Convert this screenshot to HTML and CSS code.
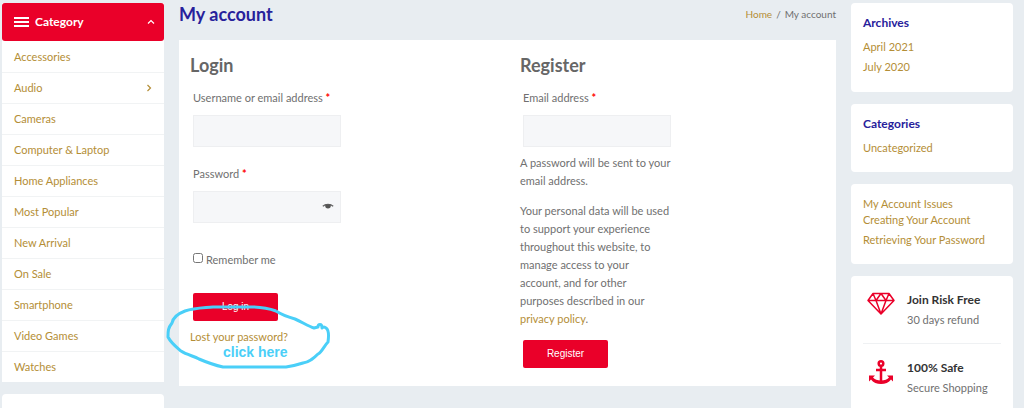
FILE: index.html
```html
<!DOCTYPE html>
<html lang="en">
<head>
<meta charset="utf-8">
<meta name="viewport" content="width=device-width, initial-scale=1">
<title>My account</title>
<link rel="stylesheet" href="styles.css">
</head>
<body>
<div class="page">
  <aside class="sidebar">
    <nav class="category">
      <button class="category-toggle" type="button" aria-expanded="true">
        <svg class="bars" viewBox="0 0 15 10" aria-hidden="true"><path d="M0 1h15M0 5h15M0 9h15"/></svg>
        <span class="category-title">Category</span>
        <svg class="caret" viewBox="0 0 8 8" aria-hidden="true"><path d="M1 5.5 4 2.5l3 3"/></svg>
      </button>
      <ul class="category-list">
        <li><a href="#">Accessories</a></li>
        <li><a href="#">Audio <svg class="caret" viewBox="0 0 8 8" aria-hidden="true"><path d="M2.5 1 5.5 4l-3 3"/></svg></a></li>
        <li><a href="#">Cameras</a></li>
        <li><a href="#">Computer &amp; Laptop</a></li>
        <li><a href="#">Home Appliances</a></li>
        <li><a href="#">Most Popular</a></li>
        <li><a href="#">New Arrival</a></li>
        <li><a href="#">On Sale</a></li>
        <li><a href="#">Smartphone</a></li>
        <li><a href="#">Video Games</a></li>
        <li><a href="#">Watches</a></li>
      </ul>
    </nav>
    <div class="card card-empty"></div>
  </aside>

  <main class="content">
    <header class="content-head">
      <h1>My account</h1>
      <nav class="breadcrumb"><a href="#">Home</a><span>/</span><span>My account</span></nav>
    </header>
    <div class="panel">
      <section class="login">
        <h2>Login</h2>
        <form class="form">
          <label for="username">Username or email address <b class="required">*</b></label>
          <input class="field" id="username" type="text">
          <label for="password">Password <b class="required">*</b></label>
          <div class="password">
            <input class="field" id="password" type="password">
            <button class="reveal" type="button" aria-label="Show password">
              <svg viewBox="0 0 12 6" aria-hidden="true"><path class="lid" d="M.8 3.2C3.4.7 8.6.7 11.2 3.2"/><path class="pupil" d="M3.2 1.4h5.6v1.4a2.8 2.6 0 0 1-5.6 0z"/></svg>
            </button>
          </div>
          <label class="remember"><input type="checkbox"> Remember me</label>
          <button class="button" type="button">Log in</button>
        </form>
        <a class="lost" href="#">Lost your password?</a>
        <div class="note">
          <svg viewBox="0 0 162 66" aria-hidden="true"><path d="M109 6C101 3 90 1.500 80 2H46C36 3 27 3 18 6C10 9 6 13 5 18C1 23 1 26 1 32C4 38 8 41 14 46C20 50 27 51 32 54C39 57 47 60 56 62H119C125 61 130 60 136 58C143 57 147 53 151 49C155 47 157 41 161 37C162 30 162 25 159 23Q157 21 155 23C155 18 151 19 151 22L147 23C141 21 135 17 128 14C121 12 115 10 109 6"/></svg>
          <span>click here</span>
        </div>
      </section>
      <section class="register">
        <h2>Register</h2>
        <form>
          <div class="form">
            <label for="email">Email address <b class="required">*</b></label>
            <input class="field" id="email" type="email">
          </div>
          <p>A password will be sent to your email address.</p>
          <p>Your personal data will be used to support your experience throughout this website, to manage access to your account, and for other purposes described in our <a href="#">privacy policy</a>.</p>
          <div class="form"><button class="button" type="button">Register</button></div>
        </form>
      </section>
    </div>
  </main>

  <aside class="sidebar widgets">
    <section class="card">
      <h3>Archives</h3>
      <ul class="links"><li><a href="#">April 2021</a></li><li><a href="#">July 2020</a></li></ul>
    </section>
    <section class="card">
      <h3>Categories</h3>
      <ul class="links"><li><a href="#">Uncategorized</a></li></ul>
    </section>
    <section class="card help">
      <ul class="links"><li><a href="#">My Account Issues<br>Creating Your Account</a></li><li><a href="#">Retrieving Your Password</a></li></ul>
    </section>
    <section class="card services">
      <div class="service">
        <svg viewBox="0 0 28 24" aria-hidden="true"><path class="line" d="M6 1.500h16l5 7L14 22 1 8.500zM1 8.500h26M6 1.500l3 7 5 13.500 5-13.500 3-7M9 8.500l5-7 5 7"/></svg>
        <div><h4>Join Risk Free</h4><p>30 days refund</p></div>
      </div>
      <div class="service">
        <svg viewBox="0 0 28 24" aria-hidden="true"><circle class="bold" cx="14" cy="3.600" r="2.300"/><path class="bold" d="M14 6v15M9 10h10"/><path class="solid" d="M2 15.500h6l-2 2c1.500 2 4.500 3 8 3s6.500-1 8-3l-2-2h6v6l-2-2c-2 3-6 4.500-10 4.500S6 22.500 4 19.500l-2 2z"/></svg>
        <div><h4>100% Safe</h4><p>Secure Shopping</p></div>
      </div>
    </section>
  </aside>
</div>
</body>
</html>
```
FILE: styles.css
```css
* { box-sizing: border-box; }
body {
  margin: 0;
  height: 100vh;
  overflow: hidden;
  background: #e8edf1;
  color: #707070;
  font: 11px/18px Lato, sans-serif;
}
h1, h2, h3, h4, p, ul { margin: 0; padding: 0; }
ul { list-style: none; }
a { color: #b48e36; text-decoration: none; }
button { border: 0; padding: 0; cursor: pointer; }

.page {
  display: grid;
  grid-template-columns: 162px minmax(0, 1fr) 162px;
  gap: 15px;
  padding: 3px 11px 0 2px;
}
.sidebar { display: flex; flex-direction: column; gap: 12px; }
.card { background: #fff; border-radius: 4px; padding: 12px 12px 16px; }
.card-empty { min-height: 60px; }

.category { background: #fff; }
.category-toggle {
  display: flex;
  align-items: center;
  gap: 6px;
  width: 100%;
  height: 38px;
  padding: 0 9px 0 12px;
  border-radius: 3px;
  background: #ea0029;
  color: #fff;
  font: bold 12px/18px Lato, sans-serif;
}
.bars { width: 15px; height: 10px; stroke: #fff; stroke-width: 2; }
.caret { width: 8px; height: 8px; margin-left: auto; fill: none; stroke: currentColor; stroke-width: 1.2; }
.category-list a {
  display: flex;
  align-items: center;
  height: 31px;
  padding: 0 11px 0 12px;
}
.category-list li + li a { border-top: 1px solid #f1f3f4; }

.content-head {
  display: flex;
  justify-content: space-between;
  align-items: center;
  height: 22px;
  margin-bottom: 15px;
}
h1 { color: #27219b; font-size: 18px; line-height: 22px; }
.breadcrumb { display: flex; gap: 4px; font-size: 10px; }
.panel {
  display: grid;
  grid-template-columns: 1fr 1fr;
  gap: 14px;
  background: #fff;
  padding: 12px 0 18px 11px;
}
h2 { color: #666; font-size: 18px; line-height: 26px; margin-bottom: 11px; }
.login { position: relative; }
.form { display: flex; flex-direction: column; align-items: flex-start; padding-left: 3px; }
.required { color: #f00; }
.field {
  width: 148px;
  height: 32px;
  margin: 8px 0 18px;
  padding: 0 8px;
  border: 1px solid #eeeff1;
  background: #f6f7f9;
  color: #777;
  font: inherit;
}
.password { position: relative; }
.reveal { position: absolute; top: 20px; right: 7px; width: 12px; height: 6px; background: none; }
.reveal svg { display: block; width: 12px; height: 6px; }
.lid { fill: none; stroke: #666; stroke-width: 1.2; }
.pupil { fill: #555; }
.remember { display: flex; align-items: center; gap: 3px; margin-top: 10px; }
.remember input { width: 10px; height: 10px; margin: 0 0 4px; }
.button {
  width: 85px;
  height: 28px;
  border-radius: 2px;
  background: #ea0029;
  color: #fff;
  font: 10px/18px "Liberation Sans", sans-serif;
}
.login .button { margin-top: 24px; }
.lost { display: inline-block; margin-top: 7px; }
.note { position: absolute; left: -23px; top: 253px; width: 162px; color: #4acff8; pointer-events: none; }
.note svg { display: block; width: 162px; height: 66px; overflow: visible; fill: none; stroke: currentColor; stroke-width: 3; stroke-linejoin: round; }
.note span { position: absolute; left: 56px; top: 38px; font: bold 14px/18px "Liberation Sans", sans-serif; }
.register .field { margin-bottom: 7px; }
.register p { width: 152px; margin-bottom: 12px; }

.widgets h3 { color: #27219b; font-size: 12px; line-height: 16px; margin-bottom: 7px; }
.links { display: grid; gap: 2px; }
.widgets .card:nth-child(2) { padding-bottom: 15px; }
.help { line-height: 16px; }
.help .links { gap: 4px; }
.widgets .services { padding: 0 12px; }
.service { display: grid; grid-template-columns: 28px 1fr; gap: 16px; padding: 16px 0 14px; }
.service + .service { border-top: 1px solid #eff1f3; }
.service svg { width: 28px; height: 24px; margin-left: 4px; }
.service h4 { color: #333; font-size: 12px; line-height: 16px; margin-bottom: 3px; }
.line { fill: none; stroke: #ea0029; stroke-width: 1.5; stroke-linejoin: round; }
.bold { fill: none; stroke: #ea0029; stroke-width: 2.5; }
.solid { fill: #ea0029; }
```
